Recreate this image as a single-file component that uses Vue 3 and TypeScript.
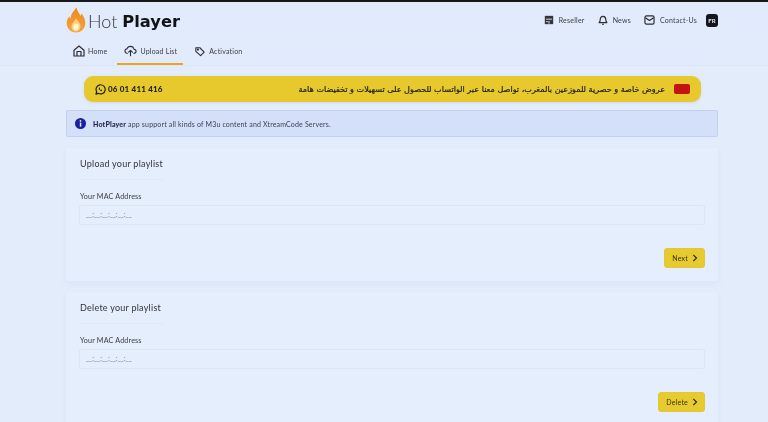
<script setup lang="ts">
const tabs = [
  { label: 'Home', icon: 'home', active: false },
  { label: 'Upload List', icon: 'upload', active: true },
  { label: 'Activation', icon: 'tag', active: false },
]
const cards = [
  { title: 'Upload your playlist', action: 'Next' },
  { title: 'Delete your playlist', action: 'Delete' },
]
</script>

<template>
  <div class="page">
    <header class="header">
      <div class="top">
        <div class="logo">
          <svg class="flame" width="20" height="26" viewBox="0 0 20 26">
            <defs>
              <linearGradient id="fl" x1="0" y1="0" x2="0" y2="1">
                <stop offset="0" stop-color="#f08a24" />
                <stop offset="1" stop-color="#f5a33a" />
              </linearGradient>
            </defs>
            <path d="M10.500 .5c1 4.500 3 5.500 4 8.500.6-1 .8-1.900.8-2.500 2.500 2.500 4 6 4 9.500 0 5.500-4 9.500-9.300 9.500S.7 21.500.7 16c0-3 1.300-5 2.600-6.800.2 1.200.6 2 1.300 2.600C4.600 7.500 7.500 4 10.500.5z" fill="url(#fl)" />
            <path d="M10 11c.6 2.500 4.500 4 4.500 8.300 0 3-2 5.200-4.600 5.200s-4.500-2.200-4.500-5c0-3.500 3.700-5 4.600-8.500z" fill="#fbd079" />
            <ellipse cx="10" cy="20" rx="2.600" ry="3.400" fill="#fff3d8" />
          </svg>
          <span class="hot">Hot</span>
          <span class="player">Player</span>
        </div>
        <nav class="links">
          <a class="link">
            <svg width="10" height="10" viewBox="0 0 12 12"><path d="M1 1h10v10H1z" fill="#33343c" /><path d="M2.500 5h7M6 7v3.500M2.500 8h2" stroke="#e1ebfb" stroke-width="1.100" fill="none" /></svg>
            Reseller
          </a>
          <a class="link">
            <svg width="10" height="11" viewBox="0 0 12 13" fill="none" stroke="#2c2d35" stroke-width="1.400" stroke-linejoin="round"><path d="M6 1.500c-2.300 0-3.300 1.800-3.300 3.700 0 2-.7 3-1.400 3.800h9.400c-.7-.8-1.400-1.800-1.400-3.800C9.300 3.300 8.300 1.500 6 1.500z" /><path d="M4.800 11h2.400" /></svg>
            News
          </a>
          <a class="link">
            <svg width="11" height="10" viewBox="0 0 12 11" fill="none" stroke="#2c2d35" stroke-width="1.300" stroke-linejoin="round"><rect x="1" y="1" width="10" height="9" rx="1.500" /><path d="M1.500 3l4.500 3 4.500-3" /></svg>
            Contact-Us
          </a>
          <span class="lang">FR</span>
        </nav>
      </div>
      <div class="tabs">
        <a v-for="t in tabs" :key="t.label" class="tab" :class="{ active: t.active }">
          <svg v-if="t.icon === 'home'" width="12" height="12" viewBox="0 0 12 12" fill="none" stroke="#2c2d35" stroke-width="1.200" stroke-linejoin="round"><path d="M1 5.200 6 1l5 4.200V11H1z" /><path d="M4 11V6.500h4V11" /></svg>
          <svg v-else-if="t.icon === 'upload'" width="13" height="12" viewBox="0 0 14 12" fill="none" stroke="#2c2d35" stroke-width="1.200" stroke-linecap="round" stroke-linejoin="round"><path d="M3.500 8.500C2 8.500 1 7.400 1 6.100 1 4.800 2 3.800 3.200 3.700 3.700 2.200 5.100 1 6.900 1c2 0 3.500 1.400 3.800 3.100 1.300.1 2.300 1.100 2.300 2.300 0 1.200-1 2.100-2.300 2.100" /><path d="M7 11V5.500M5 7.300l2-2 2 2" /></svg>
          <svg v-else class="tag" width="10" height="11" viewBox="0 0 12 12" fill="none" stroke="#2c2d35" stroke-width="1.300" stroke-linejoin="round"><path d="M1 1.500h4.800L11 6.700 6.700 11 1 5.800z" /><circle cx="3.500" cy="3.700" r=".7" /></svg>
          {{ t.label }}
        </a>
      </div>
    </header>

    <main class="main">
      <div class="promo">
        <span class="phone">
          <svg width="11" height="11" viewBox="0 0 12 12" fill="none" stroke="#1e1e14" stroke-width="1.300" stroke-linejoin="round"><path d="M1 11l.8-2.700A5 5 0 1 1 3.700 10.200z" /><path d="M4.300 3.800c-.5.500-.3 1.500.5 2.500s1.900 1.600 2.600 1.300l.5-.8-1.100-.7-.5.400c-.5-.2-1-.7-1.200-1.200l.4-.5-.6-1.100z" fill="#1e1e14" stroke="none" /></svg>
          06 01 411 416
        </span>
        <span class="offer">
          <span class="arabic" dir="rtl">عروض خاصة و حصرية للموزعين بالمغرب، تواصل معنا عبر الواتساب للحصول على تسهيلات و تخفيضات هامة</span>
          <span class="flag"></span>
        </span>
      </div>

      <div class="alert">
        <svg width="11" height="11" viewBox="0 0 11 11"><circle cx="5.500" cy="5.500" r="5.500" fill="#1a1fa0" /><rect x="4.800" y="4.600" width="1.500" height="4" fill="#e6ecfb" /><circle cx="5.500" cy="2.900" r=".9" fill="#e6ecfb" /></svg>
        <span><b>HotPlayer</b> app support all kinds of M3u content and XtreamCode Servers.</span>
      </div>

      <section v-for="c in cards" :key="c.title" class="card">
        <h2 class="title">{{ c.title }}</h2>
        <div class="rule"></div>
        <label class="label">Your MAC Address</label>
        <div class="input">__:__:__:__:__:__</div>
        <div class="actions">
          <button class="btn" type="button">
            {{ c.action }}
            <svg width="6" height="8" viewBox="0 0 6 8" fill="none" stroke="#2a2712" stroke-width="1.200"><path d="M1.300 .8 4.500 4 1.300 7.200" /></svg>
          </button>
        </div>
      </section>
    </main>
  </div>
</template>

<style>
html, body { margin: 0; background: #e2ecfb; overflow: hidden; }
</style>

<style scoped>
.page {
  width: 768px;
  height: 422px;
  overflow: hidden;
  background: #e2ecfb;
  font-family: Lato, "Noto Sans", sans-serif;
  color: #2c2d35;
  filter: blur(0.45px);
  border-top: 2px solid #17181c;
  box-sizing: border-box;
}
.header {
  height: 64px;
  padding: 0 50px 0 66px;
  box-sizing: border-box;
  background: #e1ebfb;
  border-bottom: 1px solid #dde6f4;
  display: flex;
  flex-direction: column;
}
.top {
  height: 34px;
  display: flex;
  align-items: center;
  justify-content: space-between;
  padding-top: 2px;
  box-sizing: border-box;
}
.logo {
  display: flex;
  align-items: center;
  height: 30px;
}
.flame { margin-right: 2px; }
.hot {
  font-size: 18px;
  font-weight: 300;
  color: #3a3a40;
  margin-right: 5px;
  margin-top: 2px;
}
.player {
  font-family: "DejaVu Sans", sans-serif;
  font-weight: 700;
  font-size: 16.300px;
  color: #111216;
  margin-top: 2px;
}
.links {
  display: flex;
  align-items: center;
  font-size: 7px;
  letter-spacing: .22px;
  color: #3b3c44;
}
.link {
  display: flex;
  align-items: center;
  gap: 5px;
  margin-left: 13px;
}
.lang {
  width: 12px;
  height: 13px;
  margin-left: 9px;
  border-radius: 3px;
  background: #15161c;
  color: #e8eefb;
  font-size: 6px;
  font-weight: 700;
  display: flex;
  align-items: center;
  justify-content: center;
}
.tabs {
  display: flex;
  flex: 1;
  align-items: stretch;
  margin-top: 2px;
  margin-left: 7px;
}
.tab {
  display: flex;
  align-items: center;
  gap: 3px;
  font-size: 7px;
  letter-spacing: .2px;
  color: #3b3c44;
  margin-right: 10px;
  padding-top: 1px;
  box-sizing: border-box;
  border-bottom: 2px solid transparent;
}
.tab.active {
  border-bottom-color: #eba524;
  padding: 1px 6px 0 7px;
  margin-right: 12px;
}
.tag { margin-right: 1px; }
.main {
  width: 652px;
  margin: 10px 0 0 66px;
  display: flex;
  flex-direction: column;
  align-items: stretch;
}
.promo {
  margin: 0 17px 0 18px;
  height: 26px;
  border-radius: 9px;
  background: #e8c92d;
  display: flex;
  align-items: center;
  justify-content: space-between;
  padding: 0 11px;
  box-sizing: border-box;
  color: #1e1e14;
  box-shadow: 0 1px 3px rgba(120,130,160,.18);
}
.phone {
  display: flex;
  align-items: center;
  gap: 2px;
  font-size: 8px;
  font-weight: 900;
  letter-spacing: .2px;
}
.offer {
  display: flex;
  align-items: center;
  gap: 9px;
}
.arabic {
  font-family: "DejaVu Sans", sans-serif;
  font-size: 8.100px;
  -webkit-text-stroke: .2px #1e1e14;
  white-space: nowrap;
}
.flag {
  width: 16px;
  height: 10px;
  border-radius: 2px;
  background: #c4140f;
}
.alert {
  margin-top: 8px;
  height: 27px;
  padding: 0 8px;
  box-sizing: border-box;
  display: flex;
  align-items: center;
  gap: 7px;
  background: #d4e0f9;
  border: 1px solid #c3d0ef;
  border-radius: 2px;
  font-size: 7px;
  letter-spacing: .17px;
  color: #3d4256;
}
.alert b { color: #25284a; font-weight: 900; }
.card {
  margin-top: 11px;
  height: 133px;
  padding: 9px 13px 0;
  box-sizing: border-box;
  background: #e4eefc;
  border-radius: 3px;
  box-shadow: 0 3px 6px rgba(150,165,195,.09);
  display: flex;
  flex-direction: column;
}
.card + .card { height: 140px; }
.title {
  margin: 0 0 0 1px;
  font-size: 9px;
  line-height: 13px;
  font-weight: 400;
  letter-spacing: .25px;
  color: #33343c;
}
.rule {
  width: 84px;
  height: 1px;
  margin-top: 9px;
  background: #e0e9f7;
}
.label {
  margin: 12px 0 0 1px;
  font-size: 7.200px;
  line-height: 10px;
  letter-spacing: .15px;
  color: #3b3c44;
}
.input {
  margin-top: 3px;
  height: 20px;
  padding: 0 6px;
  box-sizing: border-box;
  border: 1px solid #dce5f3;
  border-radius: 2px;
  background: #e4eefc;
  font-size: 7.500px;
  line-height: 18px;
  color: #7d8496;
  letter-spacing: -.3px;
}
.actions {
  display: flex;
  justify-content: flex-end;
  margin-top: 23px;
}
.btn {
  height: 20px;
  padding: 0 6px 0 7px;
  border: 1px solid #e2c63e;
  border-radius: 3px;
  background: #e7ca2e;
  font-family: inherit;
  font-size: 7px;
  letter-spacing: .2px;
  color: #3a3618;
  display: flex;
  align-items: center;
  gap: 4px;
}
</style>
